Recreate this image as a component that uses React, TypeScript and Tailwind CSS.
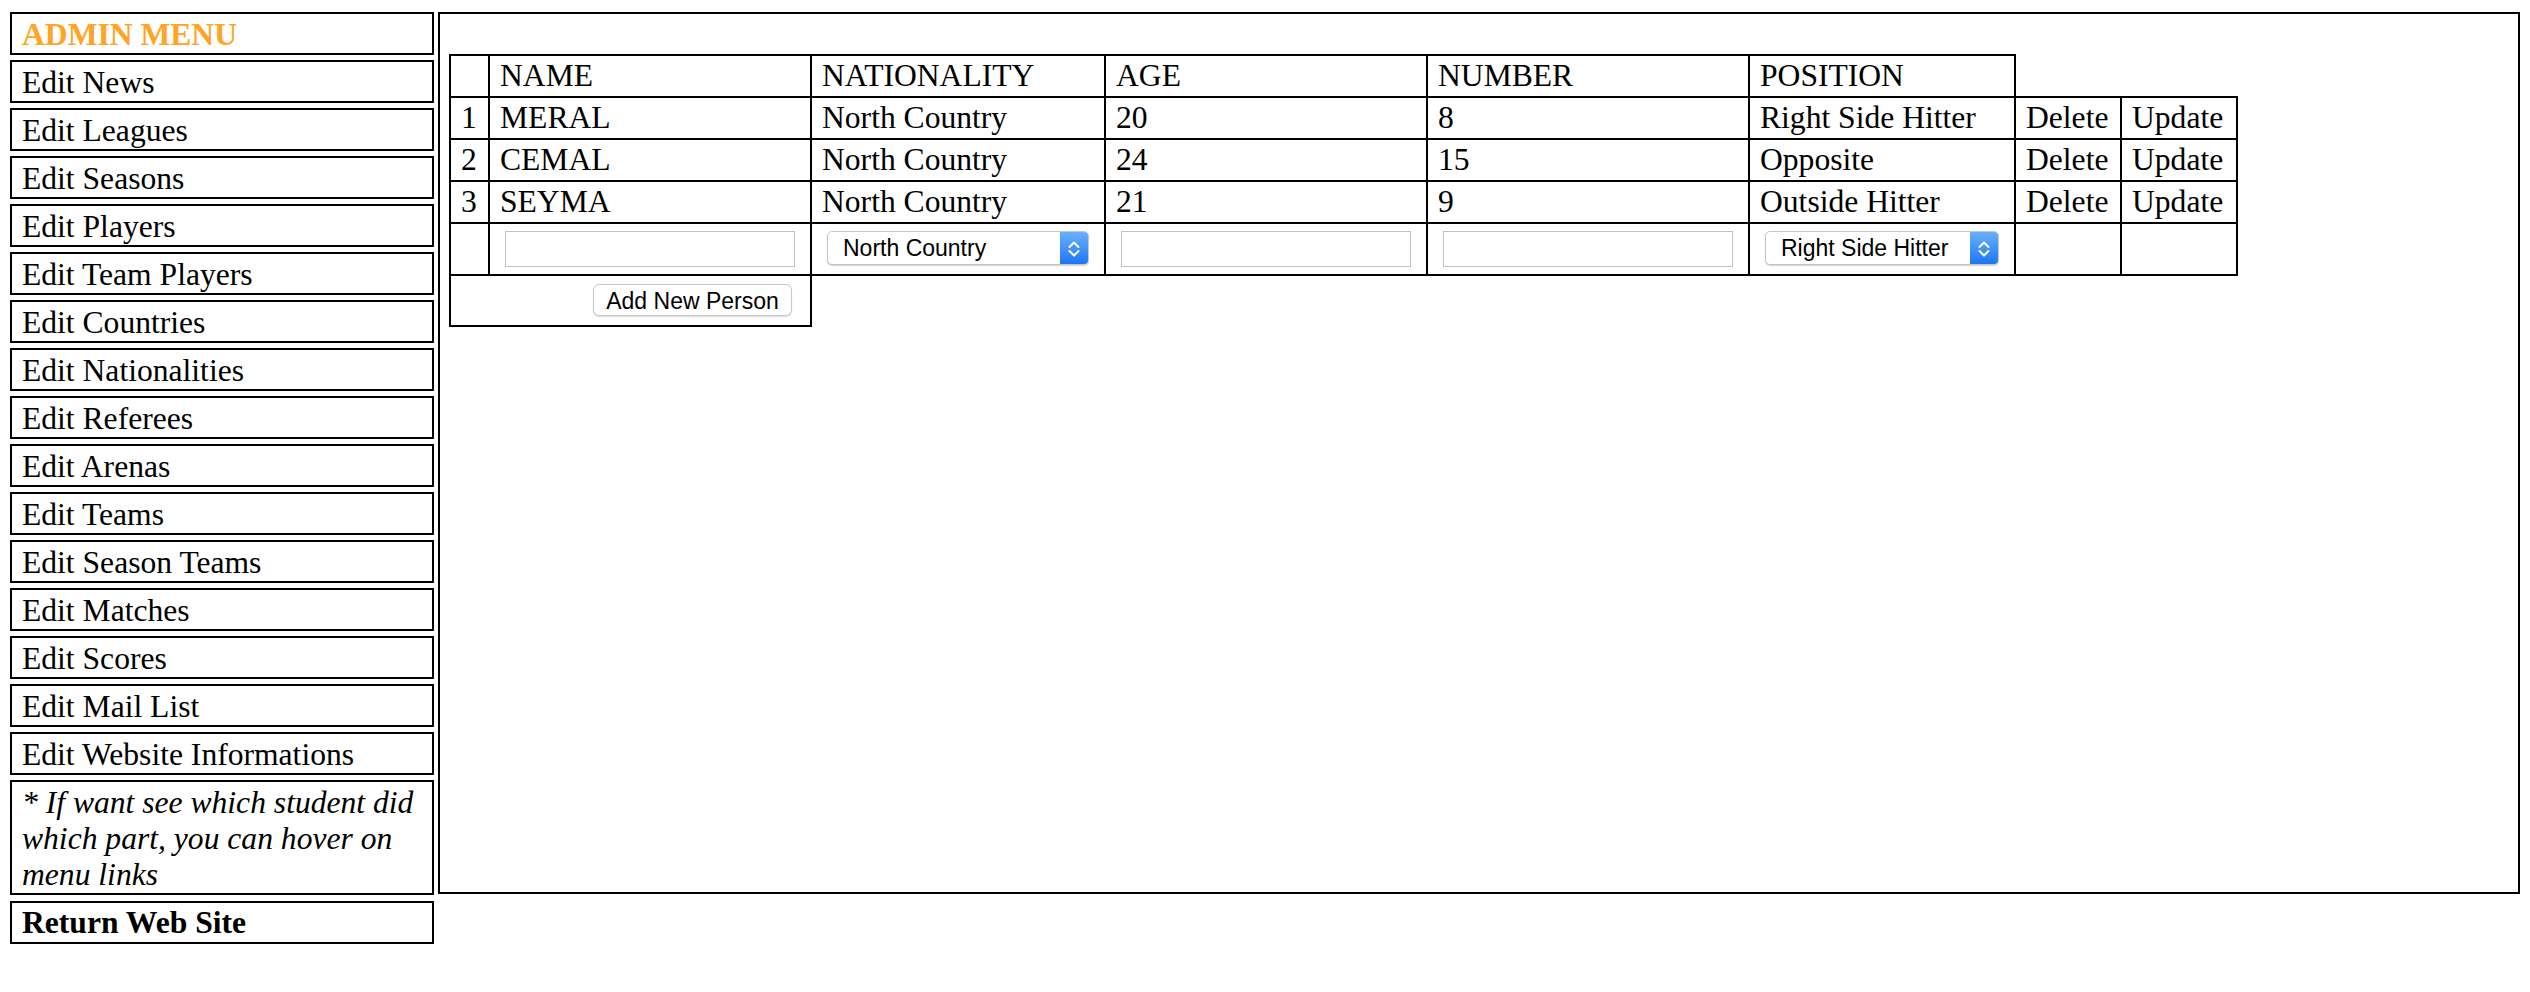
import React from "react";

const menuItems = [
  "Edit News",
  "Edit Leagues",
  "Edit Seasons",
  "Edit Players",
  "Edit Team Players",
  "Edit Countries",
  "Edit Nationalities",
  "Edit Referees",
  "Edit Arenas",
  "Edit Teams",
  "Edit Season Teams",
  "Edit Matches",
  "Edit Scores",
  "Edit Mail List",
  "Edit Website Informations",
];

const players = [
  { n: "1", name: "MERAL", nat: "North Country", age: "20", num: "8", pos: "Right Side Hitter" },
  { n: "2", name: "CEMAL", nat: "North Country", age: "24", num: "15", pos: "Opposite" },
  { n: "3", name: "SEYMA", nat: "North Country", age: "21", num: "9", pos: "Outside Hitter" },
];

const cell =
  "border-2 border-black pl-[10px] pr-[10px] pt-[2px] pb-[2px] leading-[36px] align-top whitespace-nowrap overflow-hidden";
const inputCell = "border-2 border-black px-[10px] py-[7px] align-top";

function Chevrons() {
  return (
    <svg width="28" height="32" viewBox="0 0 28 32" fill="none">
      <polyline points="9.5,15 14,10.5 18.5,15" stroke="white" strokeWidth="2" strokeLinecap="round" strokeLinejoin="round" />
      <polyline points="9.5,19 14,23.5 18.5,19" stroke="white" strokeWidth="2" strokeLinecap="round" strokeLinejoin="round" />
    </svg>
  );
}

function FakeSelect({ value, className }: { value: string; className: string }) {
  return (
    <div
      className={
        "ml-[5px] h-[34px] flex items-stretch rounded-[5px] border border-[#c6c6c6] bg-white shadow-[0_1px_1px_rgba(0,0,0,0.18)] overflow-hidden " +
        className
      }
    >
      <div className="flex-1 pl-[15px] pt-[1px] flex items-center font-['Liberation_Sans',Arial,sans-serif] text-[23px] leading-none text-black whitespace-nowrap">
        {value}
      </div>
      <div className="w-[28px] bg-gradient-to-b from-[#68b0fc] to-[#1a76f3] flex items-center justify-center">
        <Chevrons />
      </div>
    </div>
  );
}

export default function App() {
  return (
    <div className="bg-white min-h-[992px] w-[2530px] pt-[12px] pl-[10px] flex items-start font-['Liberation_Serif','Times_New_Roman',serif] text-[31.6px] text-black">
      {/* Left menu */}
      <div className="w-[424px] flex flex-col gap-[5px] shrink-0">
        <div className="h-[43px] border-2 border-black pl-[10px] pt-[3px] leading-[36px] font-bold text-[#ffa424]">
          ADMIN MENU
        </div>
        {menuItems.map((m) => (
          <div key={m} className="h-[43px] border-2 border-black pl-[10px] pt-[3px] leading-[36px] whitespace-nowrap">
            {m}
          </div>
        ))}
        <div className="border-2 border-black pl-[10px] pr-[4px] pt-[3px] leading-[36px] italic">
          * If want see which student did which part, you can hover on menu links
        </div>
        <div className="h-[43px] mt-[1px] border-2 border-black pl-[10px] pt-[2px] leading-[36px] font-bold">
          Return Web Site
        </div>
      </div>

      {/* Main panel */}
      <div className="ml-[4px] w-[2082px] h-[882px] border-2 border-black pt-[40px] pl-[9px] shrink-0">
        <table className="border-collapse table-fixed w-[1787px]">
          <colgroup>
            <col className="w-[39px]" />
            <col className="w-[322px]" />
            <col className="w-[294px]" />
            <col className="w-[322px]" />
            <col className="w-[322px]" />
            <col className="w-[266px]" />
            <col className="w-[106px]" />
            <col className="w-[116px]" />
          </colgroup>
          <tbody>
            <tr>
              <td className={cell}></td>
              <td className={cell}>NAME</td>
              <td className={cell}>NATIONALITY</td>
              <td className={cell}>AGE</td>
              <td className={cell}>NUMBER</td>
              <td className={cell}>POSITION</td>
            </tr>
            {players.map((p) => (
              <tr key={p.n}>
                <td className={cell}>{p.n}</td>
                <td className={cell}>{p.name}</td>
                <td className={cell}>{p.nat}</td>
                <td className={cell}>{p.age}</td>
                <td className={cell}>{p.num}</td>
                <td className={cell}>{p.pos}</td>
                <td className={cell}>Delete</td>
                <td className={cell}>Update</td>
              </tr>
            ))}
            <tr>
              <td className={inputCell}></td>
              <td className={inputCell}>
                <input type="text" className="block ml-[5px] w-[290px] h-[36px] border border-[#c2c2c2] bg-white outline-none" />
              </td>
              <td className={inputCell}>
                <FakeSelect value="North Country" className="w-[262px]" />
              </td>
              <td className={inputCell}>
                <input type="text" className="block ml-[5px] w-[290px] h-[36px] border border-[#c2c2c2] bg-white outline-none" />
              </td>
              <td className={inputCell}>
                <input type="text" className="block ml-[5px] w-[290px] h-[36px] border border-[#c2c2c2] bg-white outline-none" />
              </td>
              <td className={inputCell}>
                <FakeSelect value="Right Side Hitter" className="w-[234px]" />
              </td>
              <td className={inputCell}></td>
              <td className={inputCell}></td>
            </tr>
            <tr>
              <td colSpan={2} className="border-2 border-black pl-[10px] pr-[18px] pt-[8px] pb-[9px]">
                <div className="flex justify-end">
                  <button
                    type="button"
                    className="h-[32px] w-[199px] pt-[2px] rounded-[6px] border border-[#c8c8c8] bg-white shadow-[0_1px_1px_rgba(0,0,0,0.14)] font-['Liberation_Sans',Arial,sans-serif] text-[23px] leading-none text-black"
                  >
                    Add New Person
                  </button>
                </div>
              </td>
            </tr>
          </tbody>
        </table>
      </div>
    </div>
  );
}
